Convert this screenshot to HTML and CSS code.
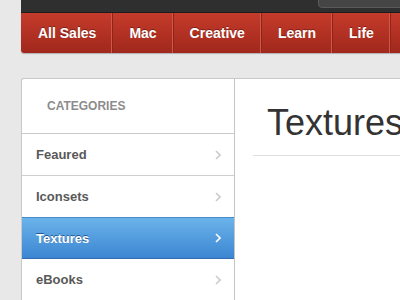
FILE: index.html
```html
<!DOCTYPE html>
<html lang="en">
<head>
    <meta charset="utf-8" />
    <title>Textures</title>
    <link rel="stylesheet" href="styles.css">
</head>
<body>
    <div class="page">
        <div class="topbar">
            <div class="search"></div>
        </div>

        <nav class="main-nav">
            <a class="nav-item" href="#">All Sales</a>
            <a class="nav-item" href="#">Mac</a>
            <a class="nav-item" href="#">Creative</a>
            <a class="nav-item" href="#">Learn</a>
            <a class="nav-item" href="#">Life</a>
            <span class="nav-item nav-rest"></span>
        </nav>

        <div class="panel">
            <aside class="sidebar">
                <div class="sidebar-title">Categories</div>
                <ul class="cat-list">
                    <li class="cat-item">Feaured <svg class="chevron" width="6" height="10" viewBox="0 0 6 10"><polyline points="1,1 5,5 1,9" /></svg></li>
                    <li class="cat-item">Iconsets <svg class="chevron" width="6" height="10" viewBox="0 0 6 10"><polyline points="1,1 5,5 1,9" /></svg></li>
                    <li class="cat-item active">Textures <svg class="chevron" width="6" height="10" viewBox="0 0 6 10"><polyline points="1,1 5,5 1,9" /></svg></li>
                    <li class="cat-item">eBooks <svg class="chevron" width="6" height="10" viewBox="0 0 6 10"><polyline points="1,1 5,5 1,9" /></svg></li>
                </ul>
            </aside>

            <main class="content">
                <h1 class="content-title">Textures</h1>
                <hr class="content-rule" />
            </main>
        </div>
    </div>
</body>
</html>
```

FILE: styles.css
```css
* {
    margin: 0;
    padding: 0;
    box-sizing: border-box;
}

body {
    font-family: "Liberation Sans", Arial, sans-serif;
    background: #e8e8e8;
    overflow: hidden;
}

.page {
    padding-left: 21px;
}

/* dark strip at the very top */
.topbar {
    height: 13px;
    background: #2f2f2f;
    border-bottom: 1px solid #1c1c1c;
    position: relative;
}

.search {
    position: absolute;
    left: 297px;
    top: -6px;
    width: 120px;
    height: 14px;
    background: #454545;
    border: 1px solid #5a5a5a;
    border-radius: 4px;
}

/* red category nav */
.main-nav {
    display: flex;
    height: 40px;
    background: linear-gradient(#c53b2b, #a0281c);
    border-bottom-left-radius: 3px;
    box-shadow: 0 1px 1px rgba(0, 0, 0, 0.25);
    overflow: hidden;
}

.nav-item {
    display: flex;
    align-items: center;
    flex-shrink: 0;
    padding: 0 16px;
    color: #fff;
    font-size: 14px;
    font-weight: bold;
    white-space: nowrap;
    text-decoration: none;
    text-shadow: 0 -1px 0 rgba(0, 0, 0, 0.35);
    border-right: 1px solid #8f2418;
    box-shadow: inset -1px 0 0 #d0584a;
}

.nav-item:first-child {
    padding-left: 17px;
}

.nav-rest {
    width: 40px;
}

/* white panel with sidebar */
.panel {
    display: flex;
    margin-top: 25px;
    background: #fff;
    border: 1px solid #c9c9c9;
    border-right: none;
    border-bottom: none;
    border-top-left-radius: 3px;
    height: 240px;
}

.sidebar {
    width: 213px;
    border-right: 1px solid #c4c4c4;
    flex-shrink: 0;
}

.sidebar-title {
    height: 55px;
    padding: 20px 0 0 25px;
    font-size: 12px;
    font-weight: bold;
    text-transform: uppercase;
    color: #8c8c8c;
    border-bottom: 1px solid #c9c9c9;
}

.cat-list {
    list-style: none;
}

.cat-item {
    display: flex;
    align-items: center;
    justify-content: space-between;
    height: 42px;
    padding: 0 13px 0 14px;
    font-size: 13px;
    font-weight: bold;
    color: #595959;
    text-shadow: 0 1px 0 #fff;
    border-bottom: 1px solid #cfcfcf;
}

.chevron polyline {
    fill: none;
    stroke: #cccccc;
    stroke-width: 1.6;
}

.cat-item.active {
    margin-top: -1px;
    height: 42px;
    color: #fff;
    text-shadow: 0 -1px 0 rgba(0, 40, 90, 0.6);
    background: linear-gradient(#6ab3ea, #3c86d2);
    border-top: 1px solid #4a8ccb;
    border-bottom: 1px solid #2f6caf;
}

.cat-item.active .chevron polyline {
    stroke: #fff;
}

.content {
    flex: 1;
    padding: 24px 0 0 18px;
    min-width: 0;
}

.content-title {
    padding-left: 14px;
    font-size: 36px;
    line-height: 40px;
    font-weight: normal;
    color: #333;
    white-space: nowrap;
}

.content-rule {
    margin-top: 12px;
    border: none;
    border-top: 1px solid #dedede;
}
```
